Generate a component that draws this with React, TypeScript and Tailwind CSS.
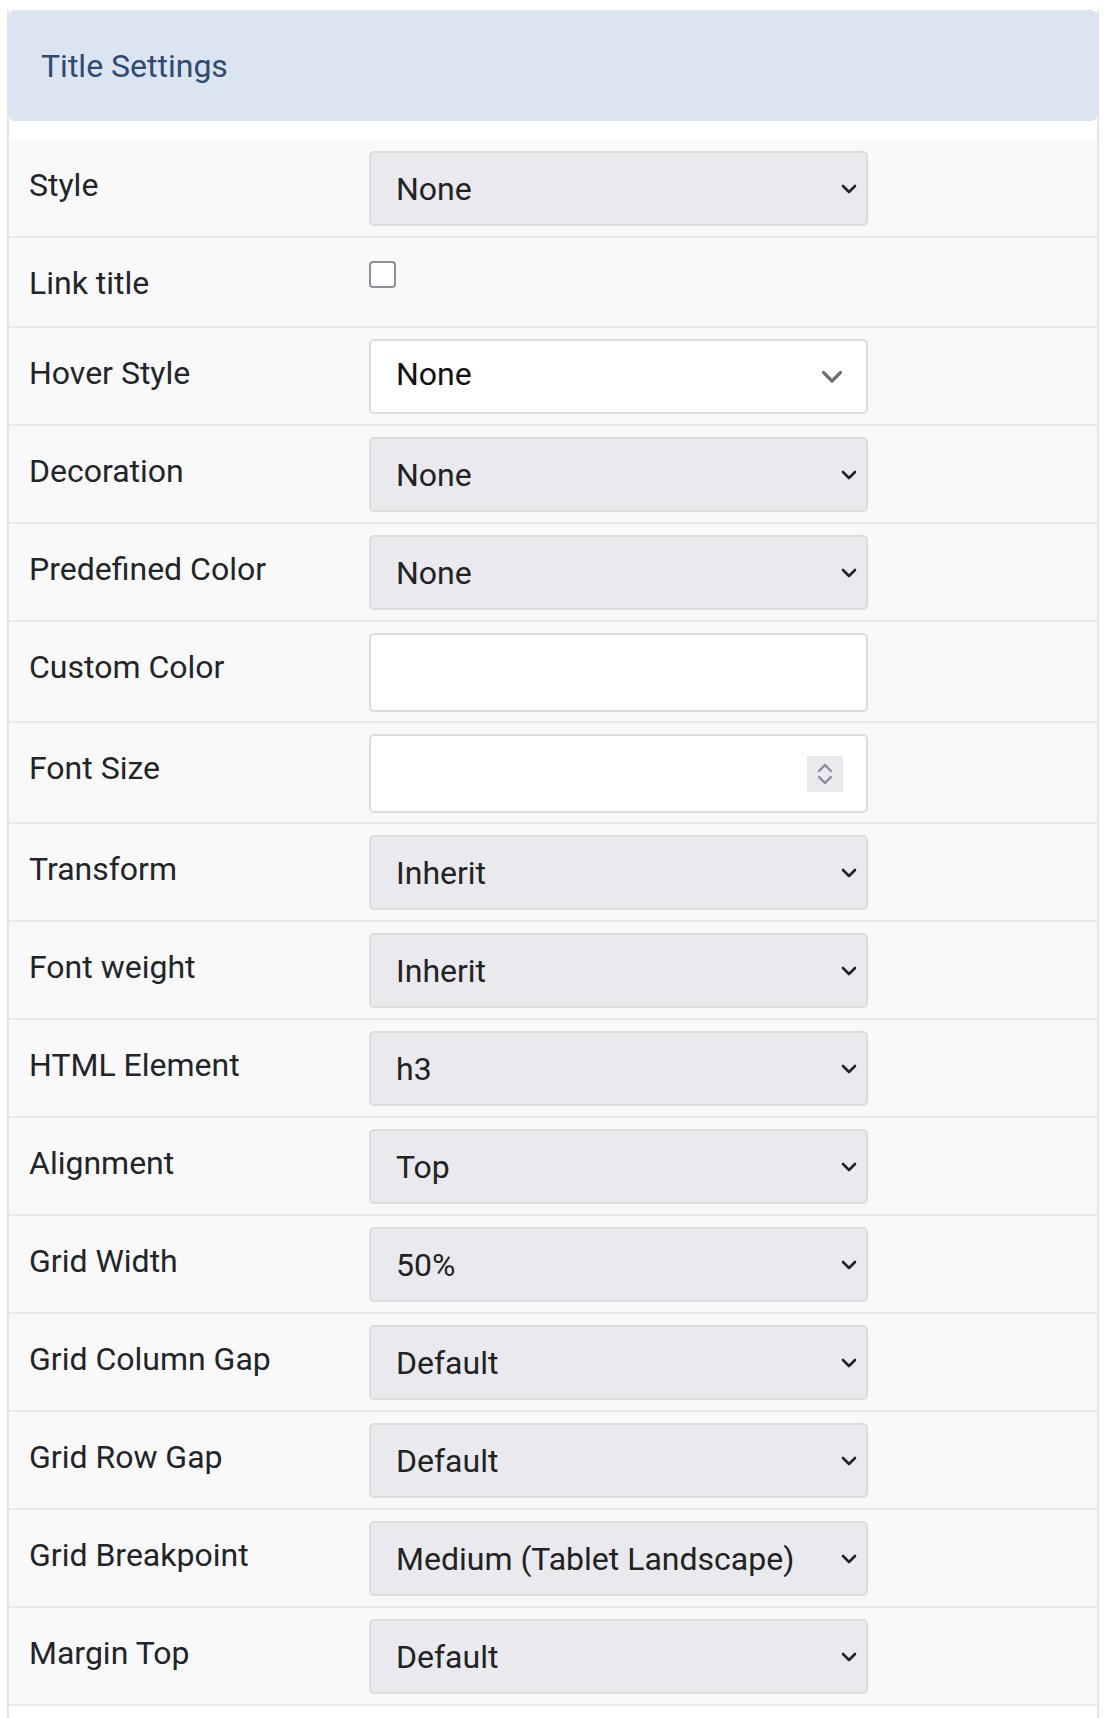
const selectRows: { label: string; value: string }[] = [
  { label: "Transform", value: "Inherit" },
  { label: "Font weight", value: "Inherit" },
  { label: "HTML Element", value: "h3" },
  { label: "Alignment", value: "Top" },
  { label: "Grid Width", value: "50%" },
  { label: "Grid Column Gap", value: "Default" },
  { label: "Grid Row Gap", value: "Default" },
  { label: "Grid Breakpoint", value: "Medium (Tablet Landscape)" },
  { label: "Margin Top", value: "Default" },
];

function SmallChevron() {
  return (
    <svg width="16" height="10" viewBox="0 0 16 10" fill="none">
      <path d="M2 2l6 6 6-6" stroke="#222222" strokeWidth="2.6" strokeLinecap="round" strokeLinejoin="round" />
    </svg>
  );
}

function Row({ label, children, h }: { label: string; children: React.ReactNode; h: string }) {
  return (
    <div className={`flex bg-[#f9f9f9] border-b-2 border-[#e9e9e9] pt-[11px] pl-[20px] ${h}`}>
      <div className="w-[340px] shrink-0 pt-[16px] leading-[36px] text-[32px] text-[#212529]">{label}</div>
      {children}
    </div>
  );
}

function FakeSelect({ value }: { value: string }) {
  return (
    <div className="flex h-[75px] w-[499px] items-center justify-between rounded-[5px] border-2 border-[#dcdcdc] bg-[#e9e9ee] pl-[25px] pr-[9px] text-[32px] text-[#222222]">
      <span>{value}</span>
      <SmallChevron />
    </div>
  );
}

export default function App() {
  return (
    <div className="min-h-[1718px] bg-white font-['Roboto',sans-serif]">
      <div className="ml-[7px] min-h-[1718px] w-[1092px] border-x-2 border-[#e5e5e5]">
        {/* HEADER */}
        <div className="mt-[10px] flex h-[111px] items-center rounded-[6px] bg-[#dde4f1] pl-[32px]">
          <p className="text-[32px] text-[#2b4b73]">Title Settings</p>
        </div>

        {/* SETTINGS ROWS */}
        <div className="mt-[19px]">
          <Row label="Style" h="h-[98px]">
            <FakeSelect value="None" />
          </Row>

          <Row label="Link title" h="h-[90px]">
            <div className="mt-[12px] h-[27px] w-[27px] rounded-[4px] border-2 border-[#8f8e9e] bg-white" />
          </Row>

          <Row label="Hover Style" h="h-[98px]">
            <div className="flex h-[75px] w-[499px] items-center justify-between rounded-[5px] border-2 border-[#dcdcdc] bg-white pl-[25px] pr-[23px] text-[32px] text-[#111111]">
              <span className="pb-[6px]">None</span>
              <svg width="22" height="14" viewBox="0 0 22 14" fill="none">
                <path d="M2.5 2.5l8.5 8.5 8.5-8.5" stroke="#707070" strokeWidth="3.2" strokeLinecap="round" strokeLinejoin="round" />
              </svg>
            </div>
          </Row>

          <Row label="Decoration" h="h-[98px]">
            <FakeSelect value="None" />
          </Row>

          <Row label="Predefined Color" h="h-[98px]">
            <FakeSelect value="None" />
          </Row>

          <Row label="Custom Color" h="h-[101px]">
            <div className="h-[79px] w-[499px] rounded-[5px] border-2 border-[#dcdcdc] bg-white" />
          </Row>

          <Row label="Font Size" h="h-[101px]">
            <div className="flex h-[79px] w-[499px] items-center justify-end rounded-[5px] border-2 border-[#dcdcdc] bg-white pr-[23px]">
              <div className="flex h-[36px] w-[36px] items-center justify-center bg-[#e9e9ee]">
                <svg width="16" height="24" viewBox="0 0 16 24" fill="none">
                  <path d="M2 9l6-6 6 6" stroke="#8a8a9a" strokeWidth="2.4" strokeLinecap="round" strokeLinejoin="round" />
                  <path d="M2 15l6 6 6-6" stroke="#8a8a9a" strokeWidth="2.4" strokeLinecap="round" strokeLinejoin="round" />
                </svg>
              </div>
            </div>
          </Row>

          {selectRows.map((r) => (
            <Row key={r.label} label={r.label} h="h-[98px]">
              <FakeSelect value={r.value} />
            </Row>
          ))}
        </div>
      </div>
    </div>
  );
}
